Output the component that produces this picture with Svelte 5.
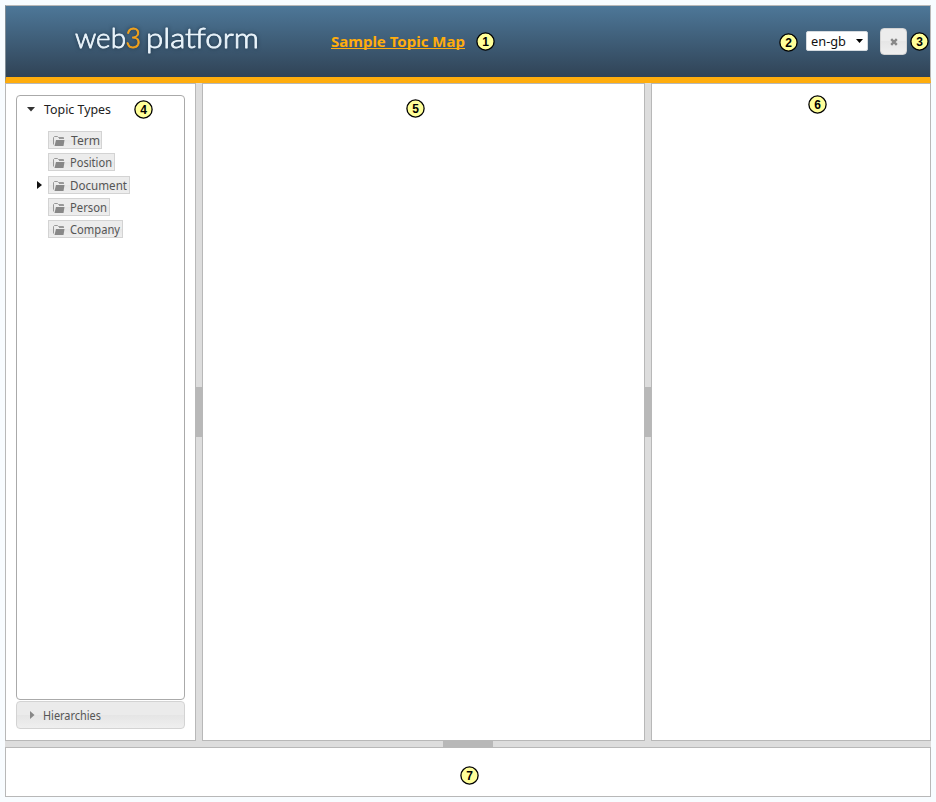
<script>
  const topics = [
    { label: 'Term', width: 54, text: 29, indent: 1, height: 22 },
    { label: 'Position', width: 67, text: 42, height: 23 },
    { label: 'Document', width: 82, text: 57, height: 22, open: true },
    { label: 'Person', width: 62, text: 37, height: 22 },
    { label: 'Company', width: 75, text: 50, height: 22 }
  ];
  const notes = [
    { n: 1, x: 476, y: 32 },
    { n: 2, x: 779, y: 33 },
    { n: 3, x: 910, y: 32 },
    { n: 4, x: 134, y: 100 },
    { n: 5, x: 406, y: 99 },
    { n: 6, x: 808, y: 95 },
    { n: 7, x: 460, y: 766 }
  ];
</script>

{#snippet label(text, width, size, color)}
  <svg class="label" {width} height="17" fill={color}>
    <text x="0" y="13" font-size={size} textLength={width} lengthAdjust="spacingAndGlyphs">{text}</text>
  </svg>
{/snippet}

<div class="page">
  <header>
    <svg class="logo" width="196" height="40" viewBox="0 0 196 40">
      <text x="5" y="27" textLength="51" lengthAdjust="spacingAndGlyphs">web</text>
      <text class="three" x="55.5" y="27" textLength="15.5" lengthAdjust="spacingAndGlyphs">3</text>
      <text x="76" y="27" textLength="113" lengthAdjust="spacingAndGlyphs">platform</text>
    </svg>
    <a class="title" href="#map">
      <svg width="140" height="20"><text x="0" y="15" textLength="134" lengthAdjust="spacingAndGlyphs">Sample Topic Map</text></svg>
    </a>
    <div class="lang">
      {@render label('en-gb', 35, 13, '#111')}
      <svg width="7" height="4"><path d="M0 0H7L3.5 4Z" /></svg>
    </div>
    <button class="close" aria-label="Close">
      <svg width="8" height="8"><path d="M1.2 1.2 6.8 6.8M6.8 1.2 1.2 6.8" stroke="#888" stroke-width="2.4" /></svg>
    </button>
  </header>

  <main>
    <section class="left">
      <div class="accordion">
        <div class="heading">
          <svg width="8" height="5"><path d="M0 0H8L4 4.5Z" fill="#333" /></svg>
          {@render label('Topic Types', 67, 12.5, '#212121')}
        </div>
        <ul>
          {#each topics as t}
            <li style:height="{t.height}px">
              <span class="arrow">
                {#if t.open}<svg width="5" height="8"><path d="M0 0 5 4 0 8Z" fill="#111" /></svg>{/if}
              </span>
              <span class="topic" style:width="{t.width}px">
                <svg class="folder" width="12" height="10" viewBox="0 0 12 10">
                  <path d="M.5 8.5V1.5L1.5.5H4.5L5.5 1.5H10.5V2.5" fill="none" stroke="#999" />
                  <path d="M6 2H11V3H6Z" fill="#999" />
                  <path d="M3 4H11.5L10.5 10H1.5Z" fill="#888" />
                </svg>
                <span style:margin-left="{t.indent ?? 0}px">{@render label(t.label, t.text, 12.5, '#555')}</span>
              </span>
            </li>
          {/each}
        </ul>
      </div>
      <div class="collapsed">
        <svg width="5" height="8"><path d="M0 0 4.5 4 0 8Z" fill="#888" /></svg>
        {@render label('Hierarchies', 58, 12.5, '#555')}
      </div>
    </section>
    <div class="gutter"><i></i></div>
    <section class="center"></section>
    <div class="gutter"><i></i></div>
    <section class="right"></section>
  </main>
  <div class="gutter wide"><i></i></div>
  <footer></footer>

  {#each notes as note}
    <svg class="note" width="19" height="19" style:left="{note.x}px" style:top="{note.y}px">
      <circle cx="9.5" cy="9.5" r="8.6" />
      <text x="9.5" y="13.6" text-anchor="middle">{note.n}</text>
    </svg>
  {/each}
</div>

<style>
  :global(body) { background: #f8fcff; overflow: hidden; }
  .page {
    position: relative; box-sizing: border-box; width: 936px; height: 802px; padding: 5px;
    display: flex; flex-direction: column; font-family: "Noto Sans", sans-serif;
  }
  svg { display: block; flex: none; }
  header {
    box-sizing: border-box; width: 926px; height: 78px; flex: none; display: flex; align-items: flex-start;
    border: 1px solid #b8b8b8; border-bottom: 6px solid #ffad0d; border-left-color: #7f8c96;
    background: linear-gradient(#4d7798, #304356) padding-box;
  }
  .logo {
    margin: 15px 0 0 64px; font: 300 28px "Lato", sans-serif; fill: #eaf4fb;
    stroke: #eaf4fb; stroke-width: .8px; stroke-linejoin: round; filter: drop-shadow(0 0 2px #1d3448);
  }
  .logo .three { fill: #f5a31b; stroke: #f5a31b; }
  .title { margin: 26px 0 0 65px; height: 17px; width: 134px; position: relative; }
  .title svg { overflow: visible; fill: #ffad0d; font: bold 15px "Noto Sans", sans-serif; }
  .title::after { content: ""; position: absolute; left: 0; top: 16px; width: 134px; height: 1px; background: #ffad0d; }
  .lang {
    box-sizing: border-box; margin: 25px 0 0 341px; width: 62px; height: 20px; padding: 0 4px 0 4px;
    display: flex; align-items: center; justify-content: space-between;
    background: #fff; border: 1px solid #d5dbe0; border-radius: 2px;
  }
  .close {
    box-sizing: border-box; margin: 22px 0 0 12px; width: 27px; height: 27px; padding: 0; display: flex;
    align-items: center; justify-content: center; border: 1px solid #d3d3d3; border-radius: 4px;
    background: linear-gradient(#ececec 50%, #e6e6e6 50%, #efefef);
  }
  main { flex: none; display: flex; height: 658px; width: 926px; }
  section, footer { box-sizing: border-box; border: 1px solid #b8b8b8; background: #fff; }
  .left { width: 191px; padding: 11px 10px 0; }
  .center { width: 443px; }
  .right { width: 280px; }
  .gutter { width: 6px; flex: none; background: #ddd; display: flex; align-items: center; justify-content: center; }
  .gutter i { flex: none; width: 8px; height: 50px; background: #b8b8b8; z-index: 1; }
  .gutter.wide { width: 926px; height: 6px; }
  .gutter.wide i { width: 50px; height: 8px; margin-right: 1px; }
  footer { width: 926px; height: 50px; flex: none; }
  .accordion { box-sizing: border-box; width: 169px; height: 605px; border: 1px solid #aaa; border-radius: 4px; }
  .heading { display: flex; align-items: center; gap: 8px; height: 27px; padding-left: 11px; }
  .heading svg:first-child { margin: 0 0 1px -1px; width: 8px; }
  .heading .label { margin-left: 1px; }
  ul { list-style: none; margin: 8px 0 0; padding: 0; }
  li { display: flex; align-items: flex-start; }
  .arrow { width: 11px; padding: 5px 0 0 20px; }
  .topic {
    box-sizing: border-box; height: 18px; padding-left: 4px; display: flex; align-items: center; gap: 5px;
    border: 1px solid #d3d3d3; background: linear-gradient(#ececec 50%, #e6e6e6 50%, #eee);
  }
  .folder { margin-top: 1px; }
  .label { overflow: visible; }
  .collapsed {
    box-sizing: border-box; width: 169px; height: 28px; margin-top: 1px; padding-left: 13px; display: flex;
    align-items: center; gap: 8px; border: 1px solid #d3d3d3; border-radius: 4px;
    background: linear-gradient(#ebebeb 50%, #e5e5e5 50%, #efefef);
  }
  .note { position: absolute; z-index: 2; font: bold 12px "Liberation Sans", sans-serif; }
  .note circle { fill: #ffff99; stroke: #000; stroke-width: 1.3; }
</style>
